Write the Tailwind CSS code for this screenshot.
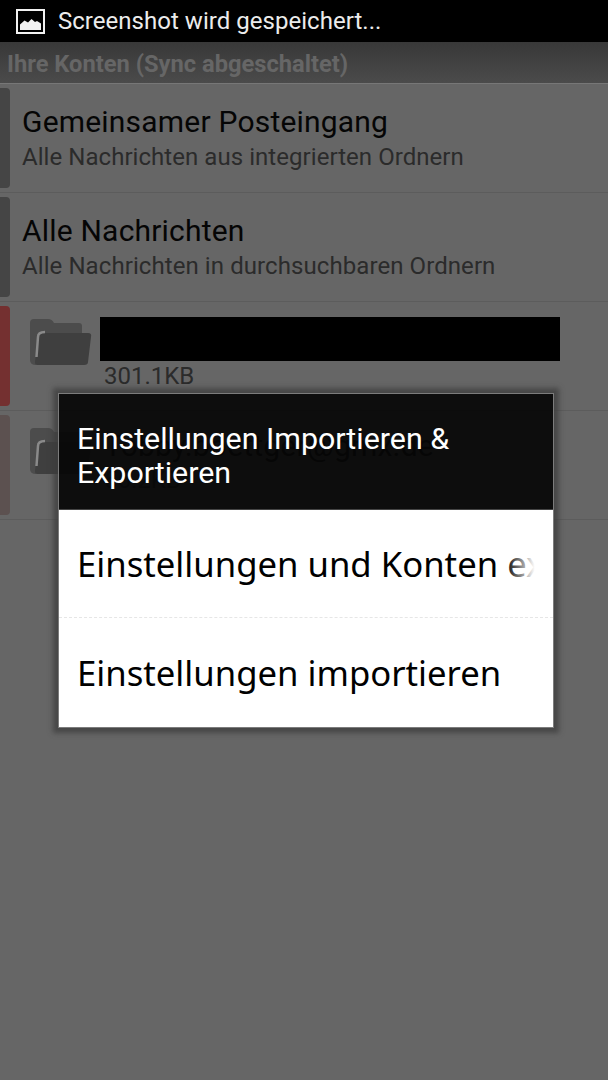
<!DOCTYPE html>
<html lang="de">
<head>
<meta charset="utf-8">
<script src="https://cdn.jsdelivr.net/npm/@tailwindcss/browser@4"></script>
</head>
<body class="m-0 bg-[#666666]">
<div class="relative w-[608px] h-[1080px] overflow-hidden bg-[#666666] font-['Roboto',sans-serif]">
  <div class="h-[42px] bg-black flex items-center pl-[16px] gap-[13px]">
    <svg width="29" height="25" viewBox="0 0 29 25"><rect x="1" y="1" width="27" height="23" fill="#000" stroke="#f2f2f2" stroke-width="2"/><path d="M4 21V15.5L8.5 11.5L12 13.5L15.5 10L19 13L21 12L25 14.5V21Z" fill="#f2f2f2"/></svg>
    <span class="text-[24px] leading-[28px] text-[#ececec] tracking-[0.03px]">Screenshot wird gespeichert...</span>
  </div>
  <div class="h-[42px] bg-gradient-to-b from-[#383838] to-[#4b4b4b] border-b border-[#777] pl-[7px] flex items-center">
    <span class="text-[23.7px] leading-[28px] font-bold text-[#666666] mt-[2px]">Ihre Konten (Sync abgeschaltet)</span>
  </div>
  <div class="flex flex-col">
    <div class="h-[109px] border-b border-[#5c5c5c] flex items-center relative">
      <div class="absolute left-0 top-[4px] w-[10px] h-[100px] bg-[#454545] rounded-r-[4px]"></div>
      <div class="pl-[22px]">
        <div class="text-[30px] leading-[38px] text-[#050505] tracking-[0.2px] mt-[-1px]">Gemeinsamer Posteingang</div>
        <div class="text-[24px] leading-[30px] text-[#2b2b2b] tracking-[0.05px] mt-[1px]">Alle Nachrichten aus integrierten Ordnern</div>
      </div>
    </div>
    <div class="h-[109px] border-b border-[#5c5c5c] flex items-center relative">
      <div class="absolute left-0 top-[4px] w-[10px] h-[100px] bg-[#454545] rounded-r-[4px]"></div>
      <div class="pl-[22px]">
        <div class="text-[30px] leading-[38px] text-[#050505] tracking-[0.2px] mt-[-1px]">Alle Nachrichten</div>
        <div class="text-[24px] leading-[30px] text-[#2b2b2b] tracking-[0.08px] mt-[1px]">Alle Nachrichten in durchsuchbaren Ordnern</div>
      </div>
    </div>
    <div class="h-[109px] border-b border-[#5c5c5c] relative flex">
      <div class="absolute left-0 top-[4px] w-[10px] h-[100px] bg-[#743030] rounded-r-[4px]"></div>
      <svg class="ml-[30px] mt-[17px]" width="62" height="47" viewBox="0 0 62 47"><path d="M4 0H18Q22 0 24 4H49Q52 4 52 7V14H12Q9 14 8 18L6 38V46Q0 46 0 41V4Q0 0 4 0Z" fill="#4c4c4c"/><path d="M11 14H58Q62 14 61 18L58 43Q58 46 54 46H7Q5 46 5 43L8 18Q8 14 11 14Z" fill="#3f3f3f"/><path d="M6.5 38L8 18Q8 13 15 13" fill="none" stroke="#8a8a8a" stroke-width="2.5"/></svg>
      <div class="ml-[8px] flex flex-col">
        <div class="w-[460px] h-[44px] bg-black mt-[15px]"></div>
        <div class="text-[24px] leading-[30px] text-[#2b2b2b] ml-[4px]">301.1KB</div>
      </div>
    </div>
    <div class="h-[109px] border-b border-[#5c5c5c] relative flex">
      <div class="absolute left-0 top-[4px] w-[10px] h-[100px] bg-[#5c5150] rounded-r-[4px]"></div>
      <svg class="ml-[30px] mt-[17px]" width="62" height="47" viewBox="0 0 62 47"><path d="M4 0H18Q22 0 24 4H49Q52 4 52 7V14H12Q9 14 8 18L6 38V46Q0 46 0 41V4Q0 0 4 0Z" fill="#4c4c4c"/><path d="M11 14H58Q62 14 61 18L58 43Q58 46 54 46H7Q5 46 5 43L8 18Q8 14 11 14Z" fill="#3f3f3f"/><path d="M6.5 38L8 18Q8 13 15 13" fill="none" stroke="#8a8a8a" stroke-width="2.5"/></svg>
      <div class="ml-[8px] flex flex-col pl-[4px]">
        <div class="text-[30px] leading-[38px] text-[#050505] mt-[16px] tracking-[0.2px]">Tobby.boettger@gmx.de</div>
        <div class="text-[24px] leading-[30px] text-[#2b2b2b]">56.2KB</div>
      </div>
    </div>
  </div>

  <div class="absolute left-[58px] top-[393px] w-[496px] border border-[#7c7c7c] shadow-[0_0_5px_5px_rgba(60,60,60,0.75)]">
    <div class="h-[116px] bg-[#060606]/[0.93] border-b border-[#444] pl-[18px] pt-[28px] text-white text-[30.4px] leading-[34px]">Einstellungen Importieren &amp;<br>Exportieren</div>
    <div class="bg-white flex flex-col font-['Noto_Sans',sans-serif]">
      <div class="h-[108px] relative flex items-center pl-[18px] border-b border-dashed border-[#e6e6e6] overflow-hidden">
        <span class="text-[34.7px] leading-[44px] text-black whitespace-nowrap">Einstellungen und Konten exportieren</span>
        <div class="absolute right-0 top-0 bottom-0 w-[48px] bg-gradient-to-r from-white/0 to-white to-[62%]"></div>
      </div>
      <div class="h-[109px] flex items-center pl-[18px]">
        <span class="text-[34.7px] leading-[44px] text-black whitespace-nowrap">Einstellungen importieren</span>
      </div>
    </div>
  </div>
</div>
</body>
</html>
